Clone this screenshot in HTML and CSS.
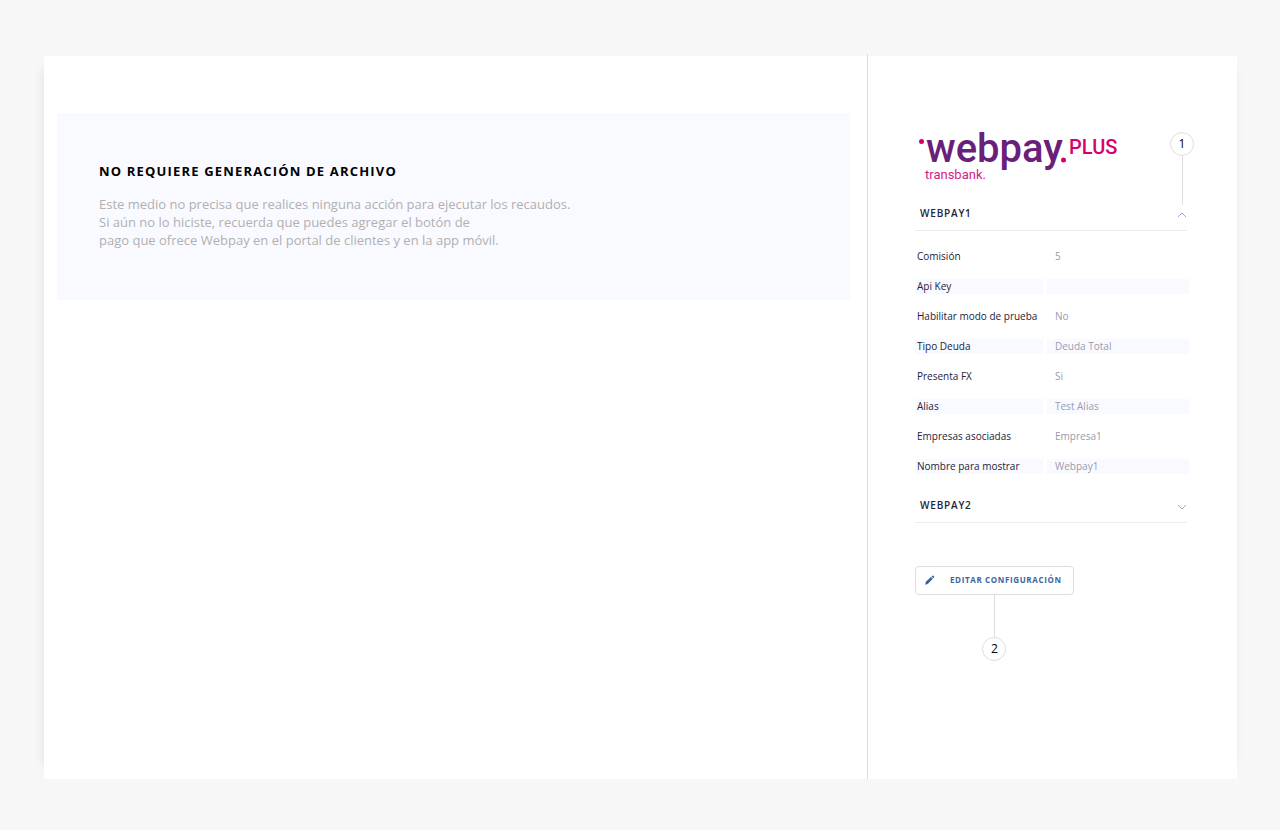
FILE: index.html
```
<!DOCTYPE html>
<html lang="es">
<head>
    <meta charset="UTF-8">
    <title>Webpay Plus</title>
    <link rel="stylesheet" href="styles.css">
</head>
<body>
<div class="panel">
    <main class="content">
        <section class="notice">
            <h1>NO REQUIERE GENERACIÓN DE ARCHIVO</h1>
            <p>Este medio no precisa que realices ninguna acción para ejecutar los recaudos.<br>
            Si aún no lo hiciste, recuerda que puedes agregar el botón de<br>
            pago que ofrece Webpay en el portal de clientes y en la app móvil.</p>
        </section>
    </main>

    <aside class="sidebar">
        <svg class="logo" width="204" height="70" viewBox="0 -14 204 70" role="img" aria-label="Webpay Plus Transbank">
            <circle cx="6.500" cy="13.500" r="2.500" fill="#d5006c"/>
            <text class="logo-webpay" x="11" y="34">webpay</text>
            <circle cx="148.500" cy="32" r="2.500" fill="#d5006c"/>
            <text class="logo-plus" x="154" y="26">PLUS</text>
            <text class="logo-transbank" x="10" y="51">transbank.</text>
        </svg>

        <div class="callout callout-top">
            <span class="callout-number">1</span>
            <span class="callout-line"></span>
        </div>

        <details open>
            <summary>WEBPAY1
                <svg class="chevron" width="10" height="6" viewBox="0 0 10 6"><path d="M1 5l4-4 4 4"/></svg>
            </summary>
            <table>
                <tr><th scope="row">Comisión</th><td>5</td></tr>
                <tr><th scope="row">Api Key</th><td></td></tr>
                <tr><th scope="row">Habilitar modo de prueba</th><td>No</td></tr>
                <tr><th scope="row">Tipo Deuda</th><td>Deuda Total</td></tr>
                <tr><th scope="row">Presenta FX</th><td>Si</td></tr>
                <tr><th scope="row">Alias</th><td>Test Alias</td></tr>
                <tr><th scope="row">Empresas asociadas</th><td>Empresa1</td></tr>
                <tr><th scope="row">Nombre para mostrar</th><td>Webpay1</td></tr>
            </table>
        </details>

        <details>
            <summary>WEBPAY2
                <svg class="chevron" width="10" height="6" viewBox="0 0 10 6"><path d="M1 1l4 4 4-4"/></svg>
            </summary>
        </details>

        <div class="actions">
            <button type="button" class="edit">
                <svg width="10" height="10" viewBox="0 0 10 10"><path d="M.3 9.700l.5-2.900L6 1.900l1.900 1.900L2.800 8.900zM6.500 1.400l.8-.7q.5-.4 1 0l.8.800q.4.500 0 1l-.7.800z"/></svg>
                EDITAR CONFIGURACIÓN
            </button>
            <div class="callout">
                <span class="callout-line"></span>
                <span class="callout-number">2</span>
            </div>
        </div>
    </aside>
</div>
</body>
</html>
```
FILE: styles.css
```
* {
    box-sizing: border-box;
}

html, body {
    margin: 0;
    padding: 0;
    background-color: #f7f7f7;
    font-family: "Open Sans", sans-serif;
}

body {
    padding: 56px 43px 51px 44px;
}

.panel {
    display: flex;
    min-height: calc(100vh - 107px);
    background-color: #ffffff;
    box-shadow: -12px 0 12px -14px rgba(0, 0, 0, 0.14), 12px 0 12px -14px rgba(0, 0, 0, 0.06);
}

.content {
    flex: 1;
    padding: 57px 17px 57px 13px;
}

.notice {
    padding: 48px 42px 51px;
    background-color: #f9faff;
}

h1 {
    margin: 0 0 14px;
    font-size: 13px;
    line-height: 20px;
    font-weight: 700;
    letter-spacing: 0.09em;
    color: #000000;
}

.notice p {
    margin: 0;
    font-size: 13px;
    line-height: 18px;
    color: #b0b0b0;
}

.sidebar {
    position: relative;
    width: 370px;
    margin-top: -2px;
    padding: 60px 50px 60px 47px;
    border-left: 1px solid #dcdcdc;
}

.logo {
    display: block;
    margin-bottom: 12px;
    font-family: Roboto, sans-serif;
}

.logo-webpay {
    font-size: 40px;
    font-weight: 500;
    fill: #6a1f7a;
}

.logo-plus {
    font-size: 20px;
    font-weight: 500;
    fill: #d5006c;
}

.logo-transbank {
    font-size: 13px;
    fill: #d5208a;
}

summary {
    display: flex;
    align-items: center;
    justify-content: space-between;
    height: 35px;
    padding-left: 5px;
    border-bottom: 1px solid #ececf0;
    font-size: 10px;
    font-weight: 600;
    letter-spacing: 0.08em;
    color: #23233b;
    list-style: none;
    cursor: pointer;
}

.chevron {
    margin-top: 4px;
    fill: none;
    stroke: #8fabdf;
}

table {
    width: calc(100% + 10px);
    margin: 3px -6px -1px -4px;
    border-spacing: 4px 15px;
    table-layout: fixed;
    font-size: 10px;
    line-height: 15px;
    text-align: left;
}

th {
    width: 128px;
    padding: 0 0 0 2px;
    font-weight: 400;
    white-space: nowrap;
    color: #23233b;
}

td {
    height: 15px;
    padding: 0 8px;
    color: #9a9aad;
}

tr:nth-child(even) th,
tr:nth-child(even) td {
    background-color: #f9faff;
}

.actions {
    display: inline-flex;
    flex-direction: column;
    align-items: center;
    margin-top: 43px;
}

.edit {
    display: flex;
    align-items: center;
    gap: 15px;
    height: 29px;
    padding: 0 11px 2px 9px;
    background-color: #ffffff;
    border: 1px solid #dedede;
    border-radius: 4px;
    font-family: inherit;
    font-size: 8px;
    font-weight: 700;
    letter-spacing: 0.08em;
    color: #3a649f;
    cursor: pointer;
}

.edit svg {
    fill: #3a649f;
}

.callout {
    display: flex;
    flex-direction: column;
    align-items: center;
}

.callout-top {
    position: absolute;
    top: 78px;
    right: 43px;
}

.callout-number {
    width: 24px;
    height: 24px;
    border: 1px solid #dedede;
    border-radius: 50%;
    font-size: 12px;
    line-height: 22px;
    text-align: center;
    color: #000000;
}

.callout-line {
    width: 1px;
    height: 42px;
    background-color: #dedede;
}

.callout-top .callout-line {
    height: 49px;
}
```
